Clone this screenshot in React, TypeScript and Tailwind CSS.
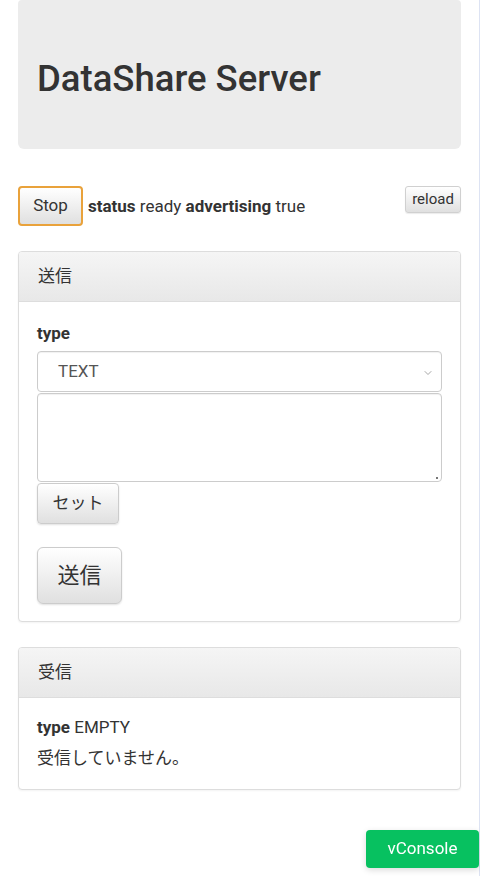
import { ChevronDown } from 'lucide-react';

const font = { fontFamily: 'Roboto, "Noto Sans CJK JP", sans-serif' };

function Panel({ title, children }: { title: string; children: React.ReactNode }) {
  return (
    <div className="rounded-[4px] border border-[#dddddd] bg-white shadow-[0_1px_2px_rgba(0,0,0,0.05)] overflow-hidden">
      <div className="h-[50px] flex items-center px-[19px] text-[17px] text-[#333] border-b border-[#dddddd] bg-gradient-to-b from-[#f5f5f5] to-[#e8e8e8]">
        {title}
      </div>
      {children}
    </div>
  );
}

export default function App() {
  return (
    <div style={font} className="min-h-screen w-[480px] border-r border-[#dde3f3] bg-white text-[#333]">
      <div className="px-[18px]">
        {/* ヘッダー */}
        <div className="h-[149px] rounded-b-[6px] rounded-t-[4px] bg-[#ececec] flex items-center px-[19px]">
          <h1 className="text-[36.5px] font-medium text-[#333] pt-[9px]">DataShare Server</h1>
        </div>

        {/* ステータス行 */}
        <div className="mt-[37px] flex items-start">
          <button className="h-[40px] w-[65px] rounded-[4px] border-2 border-[#e9a23b] bg-gradient-to-b from-[#ffffff] to-[#e0e0e0] text-[17px] text-[#333]">
            Stop
          </button>
          <div className="ml-[5px] mt-[8px] text-[17px]">
            <b>status</b> ready <b>advertising</b> true
          </div>
          <button className="ml-auto h-[27px] w-[56px] rounded-[3px] border border-[#d0d0d0] bg-gradient-to-b from-[#ffffff] to-[#e0e0e0] text-[15px] text-[#333] shadow-[0_1px_1px_rgba(0,0,0,0.08)]">
            reload
          </button>
        </div>

        {/* 送信 */}
        <div className="mt-[25px]">
          <Panel title="送信">
            <div className="px-[18px] pt-[20px] pb-[17px]">
              <div className="text-[17px] font-bold leading-[22px]">type</div>
              <div className="mt-[7px] relative h-[41px] rounded-[4px] border border-[#cccccc] flex items-center pl-[20px] text-[17px] text-[#555] shadow-[inset_0_1px_1px_rgba(0,0,0,0.06)]">
                TEXT
                <ChevronDown className="absolute right-[7px] top-[15px] w-[12px] h-[12px] text-[#888]" strokeWidth={1.5} />
              </div>
              <div className="relative mt-[1px] h-[89px] rounded-[4px] border border-[#cccccc] shadow-[inset_0_1px_1px_rgba(0,0,0,0.06)]">
                <span className="absolute right-[3px] bottom-[2px] w-[2px] h-[2px] bg-[#777]" />
              </div>
              <button className="mt-[1px] h-[41px] w-[82px] rounded-[4px] border border-[#cccccc] bg-gradient-to-b from-[#ffffff] to-[#e0e0e0] text-[17px] text-[#333] shadow-[0_1px_2px_rgba(0,0,0,0.12)]">
                セット
              </button>
              <div className="mt-[23px]">
                <button className="h-[57px] w-[85px] rounded-[6px] border border-[#cccccc] bg-gradient-to-b from-[#ffffff] to-[#e0e0e0] text-[22px] text-[#333] shadow-[0_1px_2px_rgba(0,0,0,0.12)]">
                  送信
                </button>
              </div>
            </div>
          </Panel>
        </div>

        {/* 受信 */}
        <div className="mt-[25px]">
          <Panel title="受信">
            <div className="px-[18px] pt-[14px] pb-[15px] text-[17px] leading-[31px]">
              <div>
                <b>type</b> EMPTY
              </div>
              <div>受信していません。</div>
            </div>
          </Panel>
        </div>
      </div>

      <button className="fixed right-[1px] bottom-[8px] h-[38px] w-[113px] rounded-[4px] bg-[#07c160] text-white text-[17px] shadow-[0_2px_6px_rgba(0,0,0,0.15)]">
        vConsole
      </button>
    </div>
  );
}
